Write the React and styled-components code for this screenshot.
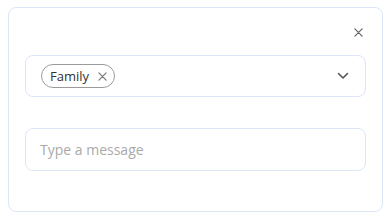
import styled, { createGlobalStyle } from "styled-components";

const GlobalStyle = createGlobalStyle`
  body {
    margin: 7px 8px 8px;
    font-family: "Open Sans", "Liberation Sans", sans-serif;
    background: #ffffff;
  }
`;

function CloseIcon({ size = 10, color = "#555", weight = 1.3 }) {
  return (
    <svg width={size} height={size} viewBox="0 0 10 10" fill="none">
      <path d="M1 1L9 9M9 1L1 9" stroke={color} strokeWidth={weight} strokeLinecap="round" />
    </svg>
  );
}

function ChevronDown() {
  return (
    <svg width="12" height="8" viewBox="0 0 12 8" fill="none">
      <path d="M1.5 1.5L6 6L10.5 1.5" stroke="#555" strokeWidth="1.6" strokeLinecap="round" strokeLinejoin="round" />
    </svg>
  );
}

export default function App() {
  return (
    <>
      <GlobalStyle />
      <Card>
        <Header>
          <CloseButton aria-label="Close">
            <CloseIcon size={9} color="#666" weight={1.4} />
          </CloseButton>
        </Header>

        <Select>
          <Chips>
            <Chip>
              <ChipLabel>Family</ChipLabel>
              <ChipRemove aria-label="Remove">
                <CloseIcon size={9} color="#777" weight={1.3} />
              </ChipRemove>
            </Chip>
          </Chips>
          <ChevronWrap>
            <ChevronDown />
          </ChevronWrap>
        </Select>

        <MessageInput placeholder="Type a message" />
      </Card>
    </>
  );
}

const Card = styled.div`
  box-sizing: border-box;
  width: 375px;
  height: 205px;
  border: 1px solid #dde6f6;
  border-radius: 8px;
  padding: 16px 16px;
  display: flex;
  flex-direction: column;
`;

const Header = styled.div`
  display: flex;
  justify-content: flex-end;
  height: 16px;
  margin-bottom: 15px;
`;

const CloseButton = styled.button`
  width: 16px;
  height: 16px;
  padding: 0;
  border: none;
  background: none;
  display: flex;
  align-items: center;
  justify-content: center;
  cursor: pointer;
`;

const Select = styled.div`
  box-sizing: border-box;
  height: 42px;
  border: 1px solid #dde6f6;
  border-radius: 8px;
  padding: 0 16px 0 15px;
  display: flex;
  align-items: center;
  justify-content: space-between;
  margin-bottom: 31px;
`;

const Chips = styled.div`
  display: flex;
  gap: 6px;
`;

const Chip = styled.div`
  box-sizing: border-box;
  height: 24px;
  border: 1px solid #9a9a9a;
  border-radius: 12px;
  padding: 0 7px 0 8px;
  display: flex;
  align-items: center;
  gap: 9px;
`;

const ChipLabel = styled.span`
  font-size: 13px;
  color: #333;
`;

const ChipRemove = styled.button`
  padding: 0;
  border: none;
  background: none;
  display: flex;
  align-items: center;
  cursor: pointer;
`;

const ChevronWrap = styled.div`
  display: flex;
  align-items: center;
`;

const MessageInput = styled.input`
  box-sizing: border-box;
  height: 43px;
  width: 100%;
  border: 1px solid #dde6f6;
  border-radius: 8px;
  padding: 0 14px;
  font-family: "Open Sans", "Liberation Sans", sans-serif;
  font-size: 14px;
  color: #333;
  outline: none;

  &::placeholder {
    color: #aaa;
  }
`;
